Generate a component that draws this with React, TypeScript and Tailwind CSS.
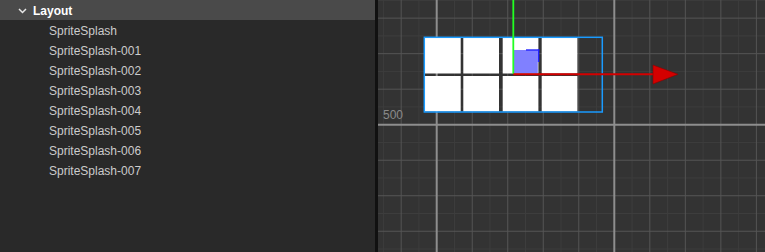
import React from "react";

const items = [
  "SpriteSplash",
  "SpriteSplash-001",
  "SpriteSplash-002",
  "SpriteSplash-003",
  "SpriteSplash-004",
  "SpriteSplash-005",
  "SpriteSplash-006",
  "SpriteSplash-007",
];

const STEP = 17.76;
const OX = 58.7;
const OY = 124.7;
const W = 387;
const H = 252;

function Grid() {
  const style = (k: number) => {
    if (k % 10 === 0) return { stroke: "#8e8e8e", w: 2 };
    if (Math.abs(k) % 2 === 0) return { stroke: "#555555", w: 1 };
    return { stroke: "#3d3d3d", w: 1 };
  };
  const order = (k: number) => (k % 10 === 0 ? 2 : Math.abs(k) % 2 === 0 ? 1 : 0);
  const all: { o: number; el: React.ReactNode }[] = [];
  for (let i = -4; i <= 20; i++) {
    const x = OX + i * STEP;
    if (x < -2 || x > W + 2) continue;
    const s = style(i);
    all.push({
      o: order(i),
      el: <line key={"v" + i} x1={x} y1={0} x2={x} y2={H} stroke={s.stroke} strokeWidth={s.w} />,
    });
  }
  for (let j = -8; j <= 8; j++) {
    const y = OY + j * STEP;
    if (y < -2 || y > H + 2) continue;
    const s = style(j);
    all.push({
      o: order(j),
      el: <line key={"h" + j} x1={0} y1={y} x2={W} y2={y} stroke={s.stroke} strokeWidth={s.w} />,
    });
  }
  return <g>{all.sort((a, b) => a.o - b.o).map((a) => a.el)}</g>;
}

const cols = [47, 85.3, 124.7, 163.7];
const rows = [38, 76];

export default function App() {
  return (
    <div
      className="w-[765px] h-[252px] flex overflow-hidden bg-[#292929]"
      style={{ fontFamily: '"Liberation Sans", Arial, sans-serif' }}
    >
      <div className="w-[375px] h-full bg-[#292929] flex flex-col">
        <div className="h-5 bg-[#4a4a4a] flex items-center pl-[18px] pt-px">
          <svg width="9" height="6" viewBox="0 0 9 6" className="mr-[6px]">
            <polyline points="1,1 4.5,4.5 8,1" fill="none" stroke="#e6e6e6" strokeWidth="1.5" />
          </svg>
          <span className="text-[12px] font-bold text-white leading-none">Layout</span>
        </div>
        <div className="flex flex-col">
          {items.map((t) => (
            <div key={t} className="h-5 flex items-center pl-[49px] pt-[2px] text-[12px] text-[#cccccc]">
              {t}
            </div>
          ))}
        </div>
      </div>
      <div className="w-[3px] h-full bg-[#111111]" />
      <div className="relative flex-1 h-full bg-[#333333] overflow-hidden">
        <svg width={W} height={H} className="absolute left-0 top-0">
          <Grid />
          {rows.map((y) =>
            cols.map((x) => (
              <rect key={x + "-" + y} x={x} y={y} width={35.7} height={35.5} fill="#ffffff" />
            ))
          )}
          <rect x={135.8} y={50} width={24} height={23.3} fill="#8080ff" />
          <rect x={148} y={49.3} width={13.3} height={1.4} fill="#2424ff" />
          <rect x={159.8} y={49.3} width={1.5} height={12.7} fill="#2424ff" />
          <rect x={46.3} y={37.3} width={178} height={74.7} fill="none" stroke="#1a9bff" strokeWidth={1.5} />
          <line x1={135.3} y1={0} x2={135.3} y2={74} stroke="#22ff22" strokeWidth={1.8} />
          <line x1={135.3} y1={74.3} x2={277} y2={74.3} stroke="#d40000" strokeWidth={2} />
          <polygon points="275,65 300,74.3 275,84" fill="#d40000" stroke="#8a0000" strokeWidth={0.6} />
        </svg>
        <span className="absolute left-[5px] top-[109px] text-[12px] leading-none text-[#8a8a8a]">500</span>
      </div>
    </div>
  );
}
